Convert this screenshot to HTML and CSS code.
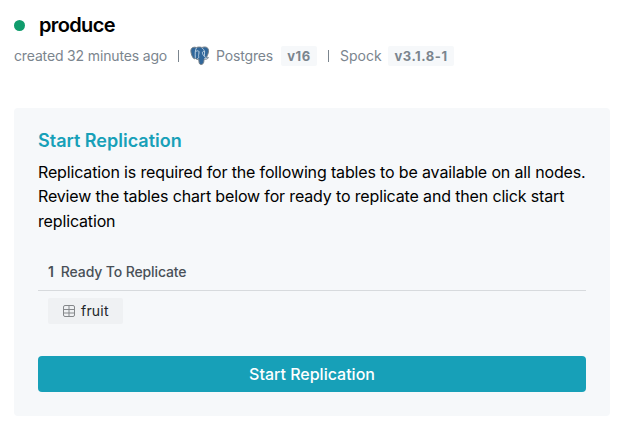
FILE: index.html
```html
<!DOCTYPE html>
<html lang="en">
<head>
<meta charset="utf-8">
<title>produce</title>
<link rel="stylesheet" href="styles.css">
</head>
<body>
<header class="header">
  <div class="name-row"><span class="status"></span><h1 class="name">produce</h1></div>
  <div class="meta">
    <span class="created">created 32 minutes ago</span>
    <span class="divider"></span>
    <svg class="elephant" viewBox="0 0 20 20" aria-hidden="true">
      <path d="M.9 4.2C1.100 1.500 3.700 .7 6.400 1.500 8.700 .8 10.200 1 12 1.500 15 .4 18.200 1 18.500 4.200c.2 2.500-.9 5-2.100 7 .8.2 1.900 0 2 .4-.5 1.400-2.500 1.900-4.200 1.500-.4 1.600-.2 3.500-1.300 4.700-1.200 1.200-3.200 1-3.700-.7-.4-1.300-.2-2.700-.5-4-1.200.6-2.600.2-3.200-.8-.9.8-1.900.5-2.600-.7C1.700 9.500.7 6.600.9 4.200Z" fill="#31679a" stroke="#77818a" stroke-width="1"/>
      <path d="M6.400 2C4.900 4.200 5.200 7.500 5.300 11.500M6 5.400c1-.9 2.700-.9 3 .3.200 1.900-.8 3.500-.3 4.900.3.900-.2 1.700-1.100 2M12 2c1.300.8 2.200 2.200 2.600 3.600.2 1.700-.4 3-.2 4.200.1.800.7 1.400 1.500 1.800M14.400 5.500c-1.100-.4-2 .2-2 1.200 0 1.500.9 2.400 1.700 3.500" fill="none" stroke="#c9d9e7" stroke-width=".9" stroke-linecap="round"/>
      <path d="M14.300 12.300c1.200.6 2.400.2 3.300-.4" fill="none" stroke="#fff" stroke-width=".7"/>
    </svg>
    <span class="product">Postgres</span>
    <span class="version">v16</span>
    <span class="divider second"></span>
    <span class="product spock">Spock</span>
    <span class="version wide">v3.1.8-1</span>
  </div>
</header>
<main class="card">
  <h2 class="card-title">Start Replication</h2>
  <p class="text">Replication is required for the following tables to be available on all nodes. Review the tables chart below for ready to replicate and then click start replication</p>
  <div class="ready"><b class="count">1</b><span>Ready To Replicate</span></div>
  <div class="table-chip">
    <svg class="grid-icon" viewBox="0 0 12 12" aria-hidden="true"><rect x=".5" y=".5" width="11" height="11" rx="1.500"/><path d="M.5 4.500h11M.5 8h11M6 .5v11"/></svg>
    <span>fruit</span>
  </div>
  <button class="start" type="button">Start Replication</button>
</main>
</body>
</html>
```
FILE: styles.css
```css
* { box-sizing: border-box; }
body { margin: 0; padding: 10px 12px 0 14px; background: #fff; color: #000; font-family: Inter, sans-serif; }
h1, h2, p { margin: 0; }
.name-row { display: flex; align-items: center; height: 30px; }
.status { width: 11px; height: 11px; margin: 0 14.500px 0 -.5px; border-radius: 50%; background: #109c6c; }
.name { font-size: 20px; line-height: 30px; font-weight: 570; letter-spacing: -.65px; }
.meta { display: flex; align-items: center; height: 20px; margin-top: 6px; color: #7b858e; font-size: 14px; line-height: 18px; letter-spacing: -.15px; white-space: nowrap; }
.created, .product { padding-bottom: 1px; }
.created { width: 153px; }
.divider { width: 1px; height: 12px; margin: 0 11px; background: #7b858e; }
.elephant { width: 20px; height: 20px; }
.product { width: 57px; margin: 0 8px 0 6px; }
.product.spock { width: 40px; margin: 0 8px 0 0; letter-spacing: 0; }
.version { width: 36px; height: 20px; border-radius: 2px; background: #f6f8fa; font-size: 13px; line-height: 21px; font-weight: 700; letter-spacing: .5px; text-align: center; }
.version.wide { width: 66px; letter-spacing: .55px; }
.card { height: 308px; margin-top: 42px; padding: 20px 24px 0; border-radius: 4px; background: #f6f8fa; }
.card-title { color: #17a0b8; font-size: 18px; line-height: 26px; font-weight: 600; }
.text { height: 73.500px; margin: 6px -5px 0 0; font-size: 16px; line-height: 24.330px; font-weight: 430; letter-spacing: -.15px; }
.ready { display: flex; align-items: center; height: 37px; margin-top: 20px; padding: 0 10px; border-bottom: 1px solid #d7dadd; color: #495057; font-size: 14px; font-weight: 500; letter-spacing: -.12px; }
.count { margin-right: 7px; font-weight: 600; }
.table-chip { display: flex; align-items: center; width: 75px; height: 26px; margin: 7px 10px 0; padding-left: 15px; border-radius: 2px; background: #eff1f3; color: #212529; font-size: 14px; letter-spacing: .2px; }
.grid-icon { width: 12px; height: 12px; margin-right: 6px; fill: none; stroke: #85888b; stroke-width: 1; }
.start { display: block; width: 100%; height: 36px; margin-top: 32px; padding: 0; border: 0; border-radius: 4px; background: #17a0b8; color: #fff; font: 500 16px/36px Inter, sans-serif; }
```
